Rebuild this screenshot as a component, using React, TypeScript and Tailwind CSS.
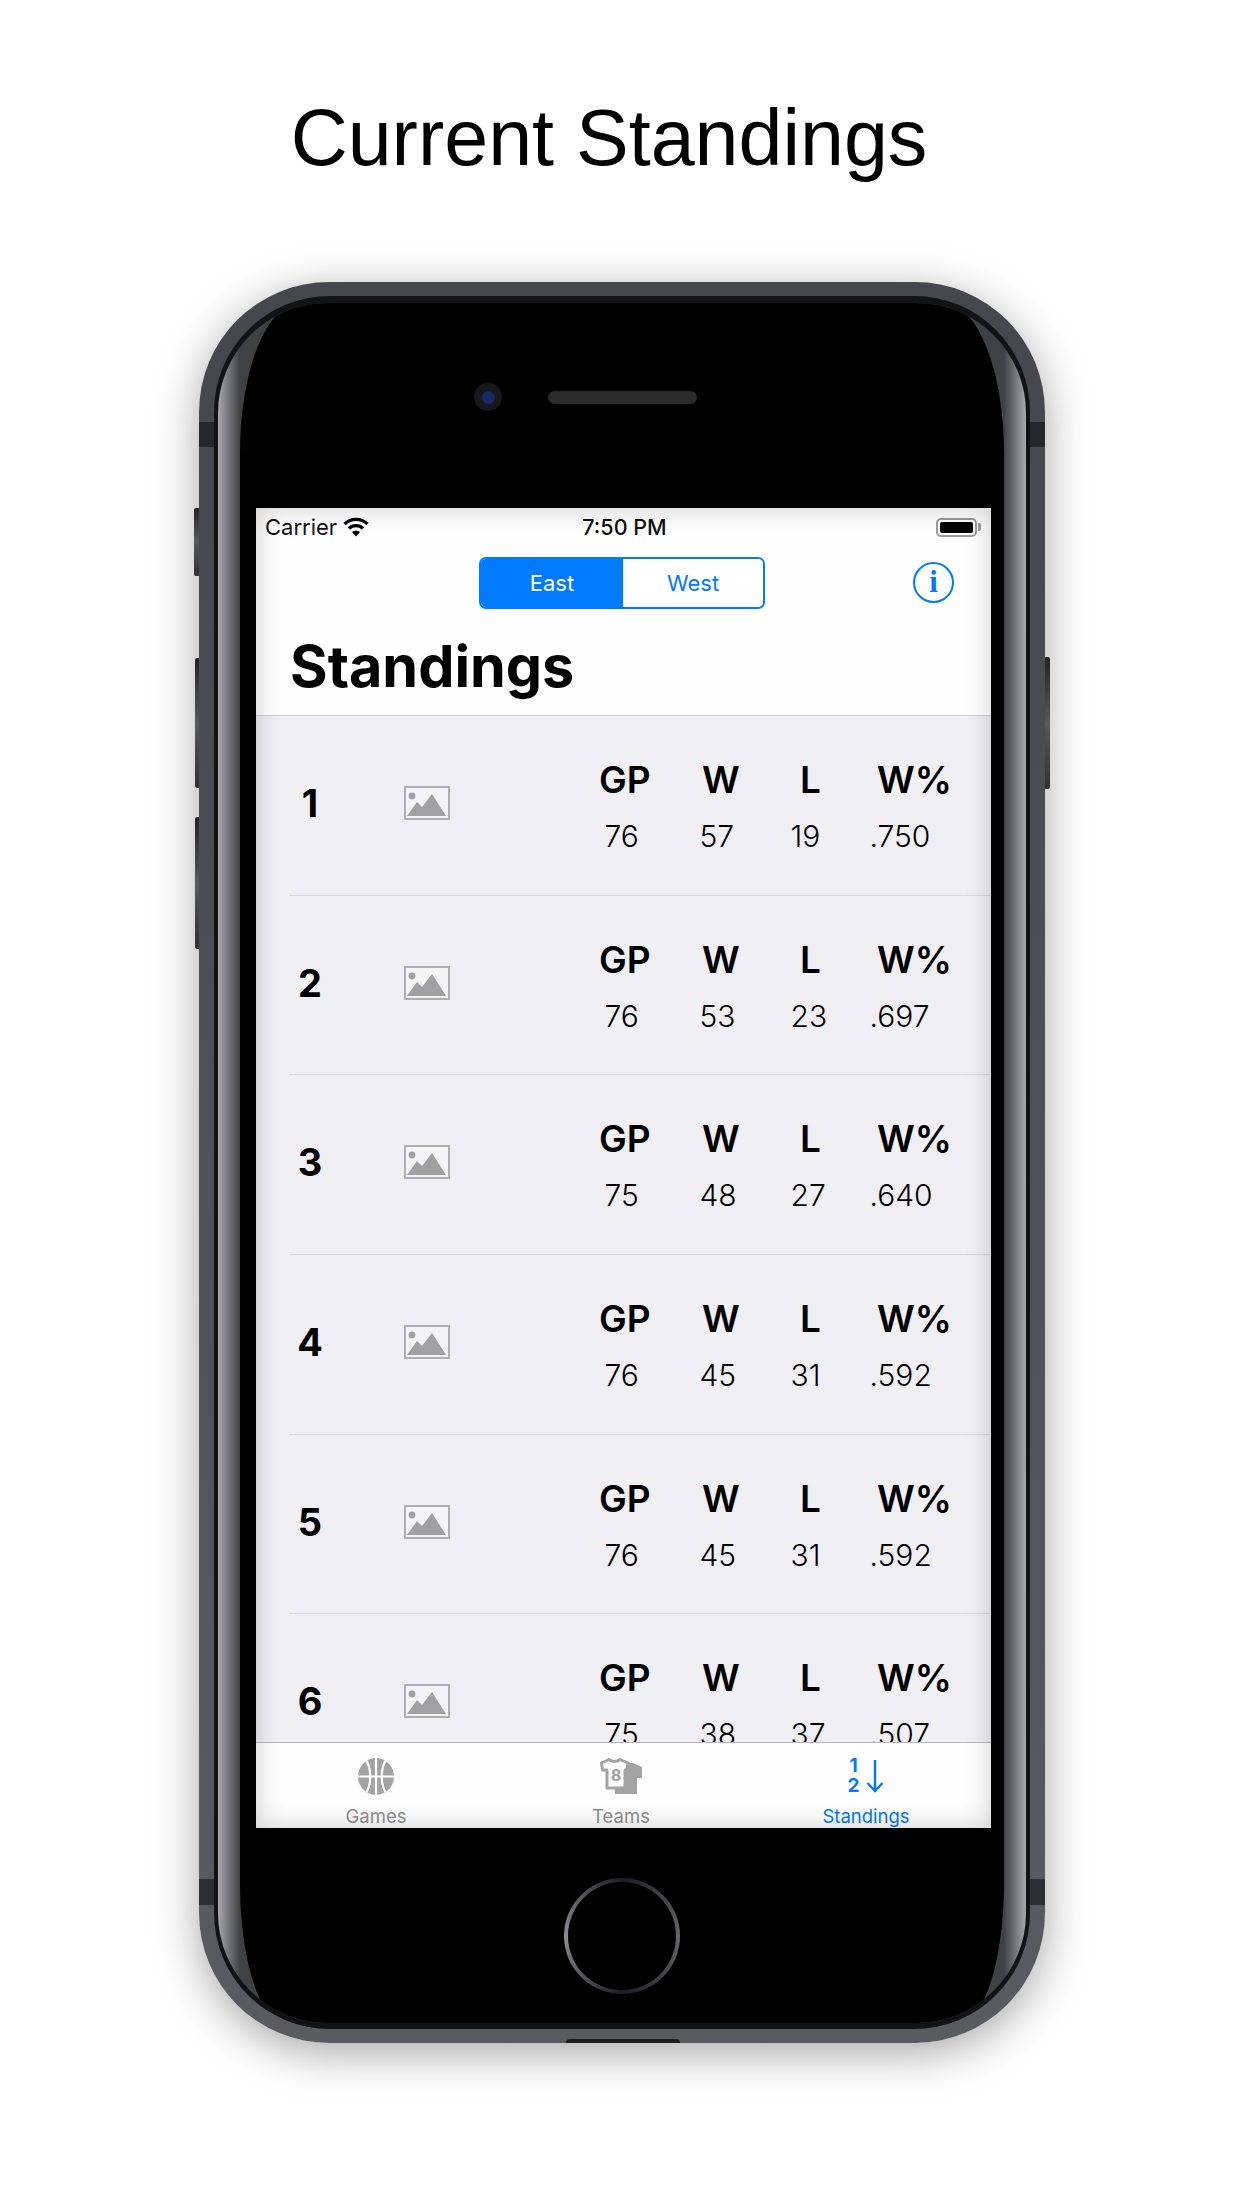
import React from "react";

const rows = [
  { r: 1, v: ["76", "57", "19", ".750"] },
  { r: 2, v: ["76", "53", "23", ".697"] },
  { r: 3, v: ["75", "48", "27", ".640"] },
  { r: 4, v: ["76", "45", "31", ".592"] },
  { r: 5, v: ["76", "45", "31", ".592"] },
  { r: 6, v: ["75", "38", "37", ".507"] },
];

function Placeholder() {
  return (
    <svg width="46" height="34" viewBox="0 0 46 34" className="block">
      <rect x="1" y="1" width="44" height="32" fill="#f4f4f6" stroke="#a8a8aa" strokeWidth="1.8" />
      <circle cx="8" cy="10" r="3.4" fill="#a0a0a2" />
      <path d="M3 30 L13 16 L18 21 L28 8 L42 30 Z" fill="#a0a0a2" />
    </svg>
  );
}

function Wifi() {
  return (
    <svg width="26" height="20" viewBox="0 0 26 20" className="block">
      <path d="M1.5 7 A16.5 16.5 0 0 1 24.5 7" fill="none" stroke="#000" strokeWidth="3.2" />
      <path d="M6 11.5 A10 10 0 0 1 20 11.5" fill="none" stroke="#000" strokeWidth="3.2" />
      <path d="M9 15 L13 19.5 L17 15 A6 6 0 0 0 9 15 Z" fill="#000" />
    </svg>
  );
}

function Basketball() {
  return (
    <svg width="36" height="37" viewBox="0 0 36 37" className="block">
      <ellipse cx="18" cy="18.5" rx="18" ry="18.5" fill="#a3a3a3" />
      <g fill="none" stroke="#fff" strokeWidth="2.2">
        <path d="M0 18.5 H36" />
        <path d="M18 0 V37" />
        <path d="M7 1 C14 9 14 28 7 36" />
        <path d="M29 1 C22 9 22 28 29 36" />
      </g>
    </svg>
  );
}

function Jersey() {
  return (
    <svg width="43" height="37" viewBox="0 0 43 37" className="block">
      <path d="M14 5 H33 L42 9 V20 H37 V36 H15 Z" fill="#a3a3a3" />
      <path d="M1.5 5 L9 1.5 C11 4 17 4 20 1.5 L28 5 L27 12 H25 V30 H7 V12 H2.5 Z" fill="#fff" stroke="#a3a3a3" strokeWidth="3" strokeLinejoin="round" />
      <text x="16" y="23" textAnchor="middle" fontSize="16" fontWeight="800" fill="#a3a3a3" fontFamily="Inter, sans-serif">8</text>
    </svg>
  );
}

function SortIcon() {
  return (
    <div className="flex items-center gap-[7px] h-[36px]">
      <div className="flex flex-col items-center font-bold text-[19px] leading-[20px] text-[#007aff]">
        <span>1</span>
        <span>2</span>
      </div>
      <svg width="18" height="34" viewBox="0 0 18 34" className="block">
        <path d="M9 1 V32 M1.5 24 L9 32 L16.5 24" fill="none" stroke="#007aff" strokeWidth="2.4" />
      </svg>
    </div>
  );
}

function Row({ r, v, last }: { r: number; v: string[]; last?: boolean }) {
  return (
    <div className={`ml-[33px] h-[179.7px] shrink-0 flex ${last ? "" : "border-b border-[#d6d6da]"}`}>
      <div className="w-[40px] ml-[1px] pt-[62px] text-center text-[38px] leading-[50px] font-bold text-black">{r}</div>
      <div className="ml-[74px] mt-[70px]">
        <Placeholder />
      </div>
      <div className="ml-[149px] flex-1 text-black">
        <div className="grid grid-cols-[103px_98px_77px_1fr] pt-[41px] text-[37px] leading-[46px] font-semibold">
          <span>GP</span>
          <span>W</span>
          <span>L</span>
          <span>W%</span>
        </div>
        <div className="grid grid-cols-[95px_91px_79px_1fr] pl-[5.5px] pt-[10px] text-[30px] leading-[46px] font-light">
          {v.map((x, i) => (
            <span key={i}>{x}</span>
          ))}
        </div>
      </div>
    </div>
  );
}

function Tab({ label, active, children }: { label: string; active?: boolean; children: React.ReactNode }) {
  return (
    <div className="flex flex-col items-center">
      <div className="h-[36px] mt-[15px] flex items-center">{children}</div>
      <div className={`mt-[11px] text-[18.5px] leading-[22px] whitespace-nowrap ${active ? "text-[#007aff]" : "text-[#8e8e90]"}`}>{label}</div>
    </div>
  );
}

function Screen() {
  return (
    <div className="relative ml-[3px] w-[735px] h-[1320px] bg-[#efeff4] overflow-hidden flex flex-col" style={{ fontFamily: "Inter, sans-serif" }}>
      <div className="bg-[#fefefe] h-[208px] shrink-0 border-b border-[#d0d0d4]">
        <div className="h-[36px] grid grid-cols-[1fr_auto_1fr] items-center pl-[9px] pr-[10px] pt-[2px]">
          <div className="flex items-center">
            <span className="text-[22px] text-[#111]">Carrier</span>
            <span className="ml-[6px]">
              <Wifi />
            </span>
          </div>
          <span className="ml-[3px] text-[21.5px] font-medium text-[#111] whitespace-nowrap">7:50 PM</span>
          <div className="flex items-center justify-end">
            <div className="w-[41px] h-[19px] rounded-[5px] border-2 border-[#9a9a9a] p-[2px]">
              <div className="w-full h-full rounded-[2px] bg-black" />
            </div>
            <div className="w-[3px] h-[8px] ml-[1px] rounded-r-[2px] bg-[#9a9a9a]" />
          </div>
        </div>
        <div className="flex mt-[13px]">
          <div className="ml-[223px] w-[286px] h-[52px] rounded-[7px] border-2 border-[#007aff] flex overflow-hidden text-[22px] leading-[48px] text-center">
            <div className="w-[142px] bg-[#007aff] text-white">East</div>
            <div className="flex-1 bg-white text-[#007aff]">West</div>
          </div>
          <div className="ml-[148px] mt-[5px] w-[41px] h-[41px] rounded-full border-2 border-[#007aff] text-[#007aff] text-center text-[31px] leading-[36px] font-bold" style={{ fontFamily: "'Liberation Serif', serif" }}>
            i
          </div>
        </div>
        <div className="ml-[34px] mt-[22px] text-[57.5px] leading-[70px] font-bold text-black">Standings</div>
      </div>
      <div className="flex-1 min-h-0 overflow-hidden flex flex-col">
        {rows.map((x, i) => (
          <Row key={x.r} r={x.r} v={x.v} last={i === rows.length - 1} />
        ))}
      </div>
      <div className="absolute left-0 right-0 bottom-0 h-[86px] bg-[#fefefe] border-t border-[#b8b8bc] grid grid-cols-[240px_250px_240px]">
        <Tab label="Games">
          <Basketball />
        </Tab>
        <Tab label="Teams">
          <Jersey />
        </Tab>
        <Tab label="Standings" active>
          <SortIcon />
        </Tab>
      </div>
      <div className="absolute inset-0 pointer-events-none shadow-[inset_0_0_26px_rgba(0,0,0,0.2)]" />
    </div>
  );
}

function SideButton({ cls }: { cls: string }) {
  return <div className={`absolute w-[6px] rounded-[2px] bg-gradient-to-b from-[#2c2c30] via-[#6a6b70] to-[#3a3a3e] ${cls}`} />;
}

export default function App() {
  return (
    <div className="w-[1242px] h-[2208px] bg-white overflow-hidden">
      <div className="h-[282px] pt-[88px] pr-[24px] text-center text-[79px] leading-[100px] text-black" style={{ fontFamily: "'Liberation Sans', Arial, sans-serif" }}>
        Current Standings
      </div>
      <div className="relative ml-[199px] w-[846px] h-[1761px]">
        <SideButton cls="left-[-5px] top-[226px] h-[68px]" />
        <SideButton cls="left-[-4px] top-[376px] h-[130px]" />
        <SideButton cls="left-[-4px] top-[535px] h-[132px]" />
        <SideButton cls="right-[-5px] top-[375px] h-[132px]" />
        <div className="w-full h-full rounded-[130px] bg-gradient-to-b from-[#46474c] to-[#5a5b60] pt-[14px] pb-[14px] px-[15px] shadow-[0_10px_45px_rgba(0,0,0,0.35)] relative">
          <div className="absolute left-0 w-[15px] top-[140px] h-[25px] bg-[#26272a]" />
          <div className="absolute right-0 w-[15px] top-[140px] h-[25px] bg-[#26272a]" />
          <div className="absolute left-0 w-[15px] top-[1597px] h-[26px] bg-[#2e2f33]" />
          <div className="absolute right-0 w-[15px] top-[1597px] h-[26px] bg-[#2e2f33]" />
          <div className="absolute left-[367px] w-[114px] bottom-0 h-[4px] rounded-t-[4px] bg-[#1c1c1f]" />
          <div className="w-full h-full rounded-[116px] bg-[#121315] pt-[7px] pb-[6px] px-[4px]">
            <div className="w-full h-full rounded-[110px] bg-[linear-gradient(to_right,#a8a8ac_0,#404145_22px,#404145_calc(100%-22px),#a8a8ac_100%)] overflow-hidden">
              <div className="mx-[22px] h-full rounded-[60px_60px_45px_45px/150px_150px_140px_140px] bg-black flex flex-col items-center">
                <div className="h-[205px] w-full flex flex-col shrink-0">
                  <div className="ml-[234px] mt-[80px] flex items-center self-start">
                    <div className="w-[28px] h-[28px] rounded-full bg-[#17181c] flex items-center justify-center">
                      <div className="w-[13px] h-[13px] rounded-full bg-[#13296b]" />
                    </div>
                    <div className="ml-[46px] w-[149px] h-[13px] rounded-full bg-[#2b2b2b]" />
                  </div>
                </div>
                <Screen />
                <div className="mt-[50px] w-[116px] h-[116px] rounded-full p-[4px] bg-[conic-gradient(#1c1c22_0deg,#66666b_90deg,#1c1c22_180deg,#8e8e92_270deg,#1c1c22_360deg)]">
                  <div className="w-full h-full rounded-full bg-black" />
                </div>
              </div>
            </div>
          </div>
        </div>
      </div>
    </div>
  );
}
